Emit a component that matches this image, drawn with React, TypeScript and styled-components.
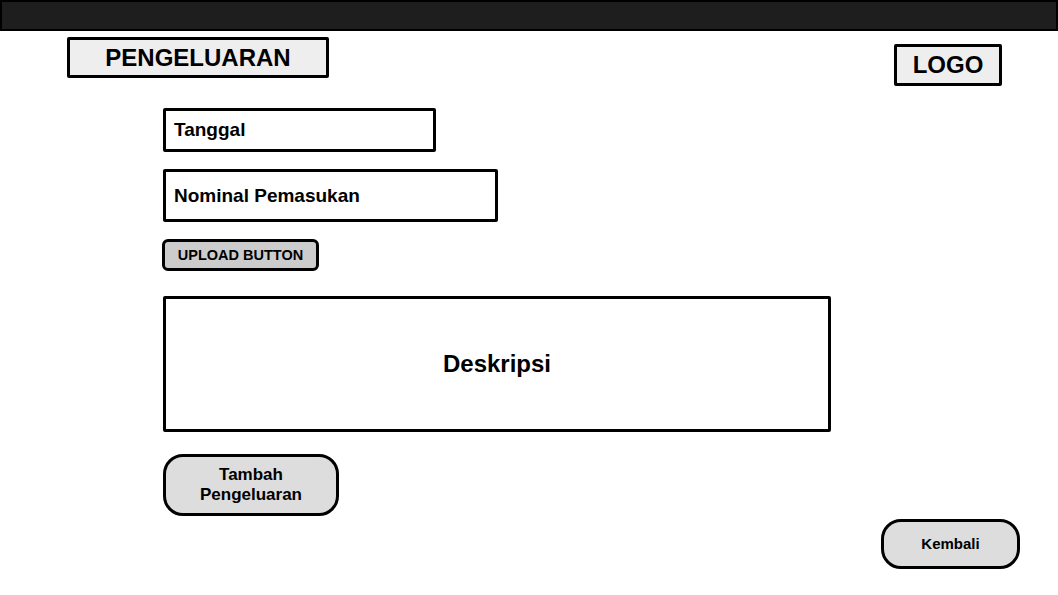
import React from 'react';
import styled, { createGlobalStyle } from 'styled-components';

const GlobalStyle = createGlobalStyle`
  body {
    margin: 0;
    background: #ffffff;
    font-family: "Liberation Sans", Arial, sans-serif;
  }
`;

const Page = styled.div`
  width: 1058px;
  height: 595px;
  background: #ffffff;
  overflow: hidden;
`;

const TopBar = styled.div`
  height: 27px;
  background: #1e1e1e;
  border: 2px solid #000;
`;

const Header = styled.div`
  display: flex;
  justify-content: space-between;
  align-items: flex-start;
  padding: 6px 56px 0 67px;
`;

const TitleBox = styled.div`
  width: 256px;
  height: 35px;
  border: 3px solid #000;
  border-radius: 2px;
  background: #eeeeee;
  display: flex;
  align-items: center;
  justify-content: center;
  font-size: 24px;
  font-weight: bold;
  color: #000;
`;

const LogoBox = styled(TitleBox)`
  width: 102px;
  height: 36px;
  margin-top: 7px;
`;

const Form = styled.div`
  display: flex;
  flex-direction: column;
  align-items: flex-start;
  padding-left: 163px;
  margin-top: 22px;
`;

const Field = styled.div<{ $w: number; $h: number; $gap: number }>`
  box-sizing: border-box;
  width: ${(p) => p.$w}px;
  height: ${(p) => p.$h}px;
  margin-bottom: ${(p) => p.$gap}px;
  border: 3px solid #000;
  border-radius: 2px;
  display: flex;
  align-items: center;
  padding-left: 8px;
  font-size: 19px;
  font-weight: bold;
  color: #000;
`;

const UploadButton = styled.div`
  box-sizing: border-box;
  width: 157px;
  height: 32px;
  margin-left: -1px;
  margin-bottom: 25px;
  border: 3px solid #000;
  border-radius: 6px;
  background: #cccccc;
  display: flex;
  align-items: center;
  justify-content: center;
  font-size: 14.5px;
  font-weight: bold;
  color: #000;
`;

const Description = styled.div`
  box-sizing: border-box;
  width: 668px;
  height: 136px;
  margin-bottom: 22px;
  border: 3px solid #000;
  border-radius: 2px;
  display: flex;
  align-items: center;
  justify-content: center;
  font-size: 24px;
  font-weight: bold;
  color: #000;
`;

const PillButton = styled.div<{ $w: number; $h: number; $size: number }>`
  box-sizing: border-box;
  width: ${(p) => p.$w}px;
  height: ${(p) => p.$h}px;
  border: 3px solid #000;
  border-radius: 20px;
  background: #dddddd;
  display: flex;
  align-items: center;
  justify-content: center;
  text-align: center;
  font-size: ${(p) => p.$size}px;
  line-height: 1.15;
  font-weight: bold;
  color: #000;
`;

const Footer = styled.div`
  display: flex;
  justify-content: flex-end;
  padding-right: 38px;
  margin-top: 3px;
`;

export default function App() {
  return (
    <Page>
      <GlobalStyle />
      <TopBar />
      <Header>
        <TitleBox>PENGELUARAN</TitleBox>
        <LogoBox>LOGO</LogoBox>
      </Header>
      <Form>
        <Field $w={273} $h={44} $gap={17}>Tanggal</Field>
        <Field $w={335} $h={53} $gap={17}>Nominal Pemasukan</Field>
        <UploadButton>UPLOAD BUTTON</UploadButton>
        <Description>Deskripsi</Description>
        <PillButton $w={176} $h={62} $size={17}>
          Tambah
          <br />
          Pengeluaran
        </PillButton>
      </Form>
      <Footer>
        <PillButton $w={139} $h={50} $size={15}>Kembali</PillButton>
      </Footer>
    </Page>
  );
}
